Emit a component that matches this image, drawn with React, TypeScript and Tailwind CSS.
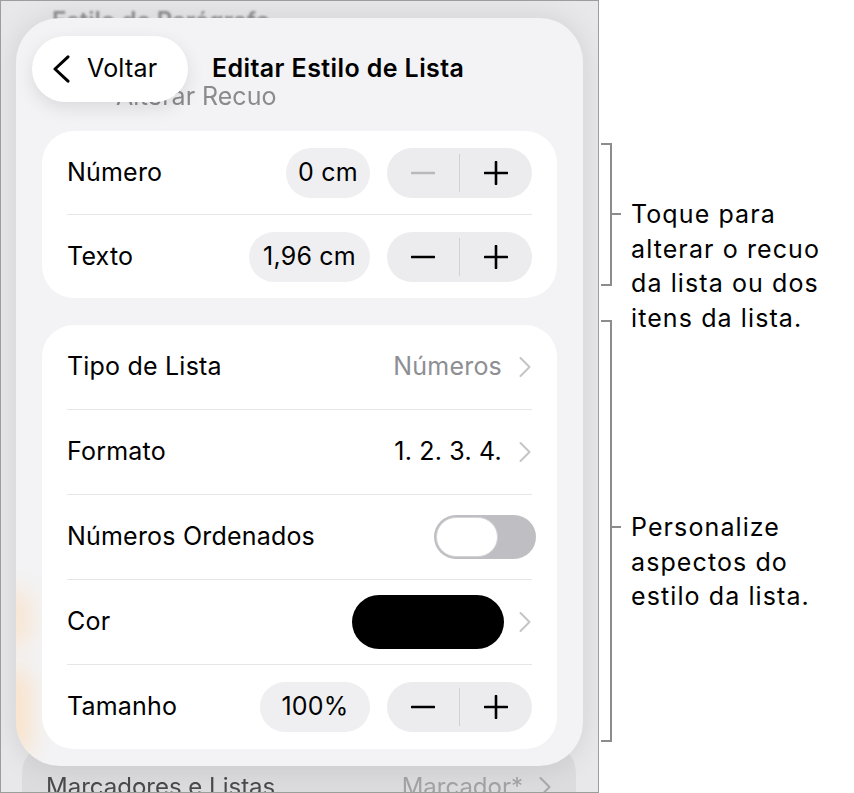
import React from 'react';

const ui = { fontFamily: 'Inter, "Noto Sans", sans-serif' };

function ChevronRight({ className = 'text-[#c4c4c7]' }: { className?: string }) {
  return (
    <svg width="13" height="22" viewBox="0 0 13 22" className={className}>
      <path d="M1.5 2 L10.5 11 L1.5 20" fill="none" stroke="currentColor" strokeWidth="2" strokeLinecap="round" strokeLinejoin="round" />
    </svg>
  );
}

function Stepper({ minusDisabled = false }: { minusDisabled?: boolean }) {
  return (
    <div className="flex h-[50px] w-[145px] items-center rounded-full bg-[#ececee]">
      <div className="flex flex-1 items-center justify-center">
        <svg width="24" height="24" viewBox="0 0 24 24" className={minusDisabled ? 'text-[#b9b9bc]' : 'text-black'}>
          <path d="M1 12 H23" stroke="currentColor" strokeWidth="2.6" strokeLinecap="round" />
        </svg>
      </div>
      <div className="h-[38px] w-px bg-[#d2d2d5]" />
      <div className="flex flex-1 items-center justify-center">
        <svg width="24" height="24" viewBox="0 0 24 24" className="text-black">
          <path d="M1 12 H23 M12 1 V23" stroke="currentColor" strokeWidth="2.6" strokeLinecap="round" />
        </svg>
      </div>
    </div>
  );
}

function ValuePill({ children, w }: { children: React.ReactNode; w: string }) {
  return (
    <div className={`flex h-[50px] ${w} items-center justify-center rounded-full bg-[#efeff1] text-[25px] tracking-[0.2px] text-black`}>
      {children}
    </div>
  );
}

function Divider() {
  return <div className="h-px bg-[#e6e6e8]" />;
}

function Row({ label, children, h = 'h-[84px]' }: { label: string; children: React.ReactNode; h?: string }) {
  return (
    <div className={`flex ${h} items-center justify-between`}>
      <span className="text-[25px] tracking-[0.2px] text-black">{label}</span>
      <div className="flex items-center">{children}</div>
    </div>
  );
}

function Bracket({ height, tickTop, textTop, lines }: { height: number; tickTop: number; textTop: number; lines: string[] }) {
  return (
    <div className="relative flex" style={{ height }}>
      <div className="w-[11px] border-y-2 border-r-2 border-[#8c8c8c]" />
      <div className="relative w-[10px]">
        <div className="absolute left-0 h-[2px] w-[9px] bg-[#8c8c8c]" style={{ top: tickTop - 1 }} />
      </div>
      <div className="absolute left-[30px] text-[25px] leading-[34.5px] tracking-[1.1px] text-black" style={{ top: textTop }}>
        {lines.map((l) => (
          <div key={l} className="whitespace-nowrap">{l}</div>
        ))}
      </div>
    </div>
  );
}

export default function App() {
  return (
    <div className="flex h-[793px] w-[854px] bg-white" style={ui}>
      {/* device frame */}
      <div className="relative h-[793px] w-[599px] overflow-hidden border border-[#9d9d9d] bg-[#e8e8eb]">
        {/* content behind the popover */}
        <div className="absolute left-[51px] top-[2px] text-[24px] font-semibold text-[#8f8f93] blur-[1px]">Estilo de Parágrafo</div>
        <div className="absolute left-[21px] top-[742px] h-[80px] w-[554px] rounded-[30px] bg-[#dcdcdf]">
          <div className="flex items-center justify-between px-[24px] pt-[26px] blur-[0.6px]">
            <span className="text-[24px] text-[#4a4a4d]">Marcadores e Listas</span>
            <div className="flex items-center gap-[16px]">
              <span className="text-[24px] text-[#a3a3a7]">Marcador*</span>
              <ChevronRight className="text-[#a9a9ad]" />
            </div>
          </div>
        </div>

        {/* popover sheet */}
        <div className="absolute left-[15px] top-[17px] h-[748px] w-[567px] overflow-hidden rounded-[44px] bg-[#f3f3f5] shadow-[0_0_30px_rgba(0,0,0,0.10)]">
          <div className="absolute left-[-16px] top-[570px] h-[60px] w-[30px] rounded-full bg-[#ffd6a8] opacity-50 blur-md" />
          <div className="absolute left-[-16px] top-[650px] h-[90px] w-[30px] rounded-full bg-[#ffd6a8] opacity-60 blur-md" />
          <div className="absolute left-[100px] top-[60px] text-[25px] text-[#8b8b8f] blur-[0.6px]">Alterar Recuo</div>

          <div className="relative flex items-center gap-[24px] pl-[16px] pt-[18px]">
            <div className="flex h-[66px] w-[156px] items-center gap-[17px] rounded-full bg-white pl-[21px] shadow-[0_6px_18px_rgba(0,0,0,0.10)]">
              <svg width="17" height="28" viewBox="0 0 17 28" className="text-black">
                <path d="M15 1.8 L2 14 L15 26.2" fill="none" stroke="currentColor" strokeWidth="3" strokeLinecap="round" strokeLinejoin="round" />
              </svg>
              <span className="text-[25px] tracking-[0.2px] text-black">Voltar</span>
            </div>
            <span className="text-[25px] font-semibold tracking-[0.4px] text-black">Editar Estilo de Lista</span>
          </div>

          <div className="relative mt-[29px] flex flex-col gap-[27px] px-[26px]">
            <div className="rounded-[32px] bg-white px-[25px]">
              <Row label="Número" h="h-[83px]">
                <ValuePill w="w-[84px]">0 cm</ValuePill>
                <div className="w-[17px]" />
                <Stepper minusDisabled />
              </Row>
              <Divider />
              <Row label="Texto" h="h-[83px]">
                <ValuePill w="w-[121px]">1,96 cm</ValuePill>
                <div className="w-[17px]" />
                <Stepper />
              </Row>
            </div>

            <div className="rounded-[32px] bg-white px-[25px]">
              <Row label="Tipo de Lista">
                <span className="text-[25px] tracking-[0.2px] text-[#8e8e93]">Números</span>
                <div className="w-[17px]" />
                <ChevronRight />
              </Row>
              <Divider />
              <Row label="Formato">
                <span className="text-[25px] tracking-[0.2px] text-black">1. 2. 3. 4.</span>
                <div className="w-[17px]" />
                <ChevronRight />
              </Row>
              <Divider />
              <Row label="Números Ordenados">
                <div className="-mr-[4px] flex h-[44px] w-[102px] items-center rounded-full bg-[#bebec3] p-[2px]">
                  <div className="h-[40px] w-[62px] rounded-full border border-[#d4d4d7] bg-white" />
                </div>
              </Row>
              <Divider />
              <Row label="Cor">
                <div className="h-[54px] w-[152px] rounded-full bg-black" />
                <div className="w-[15px]" />
                <ChevronRight />
              </Row>
              <Divider />
              <Row label="Tamanho">
                <ValuePill w="w-[110px]">100%</ValuePill>
                <div className="w-[17px]" />
                <Stepper />
              </Row>
            </div>
          </div>
        </div>
      </div>

      {/* annotations */}
      <div className="flex flex-col gap-[34px] pl-[2px] pt-[143px]">
        <Bracket height={143} tickTop={71} textTop={54} lines={['Toque para', 'alterar o recuo', 'da lista ou dos', 'itens da lista.']} />
        <Bracket height={422} tickTop={207} textTop={190} lines={['Personalize', 'aspectos do', 'estilo da lista.']} />
      </div>
    </div>
  );
}
